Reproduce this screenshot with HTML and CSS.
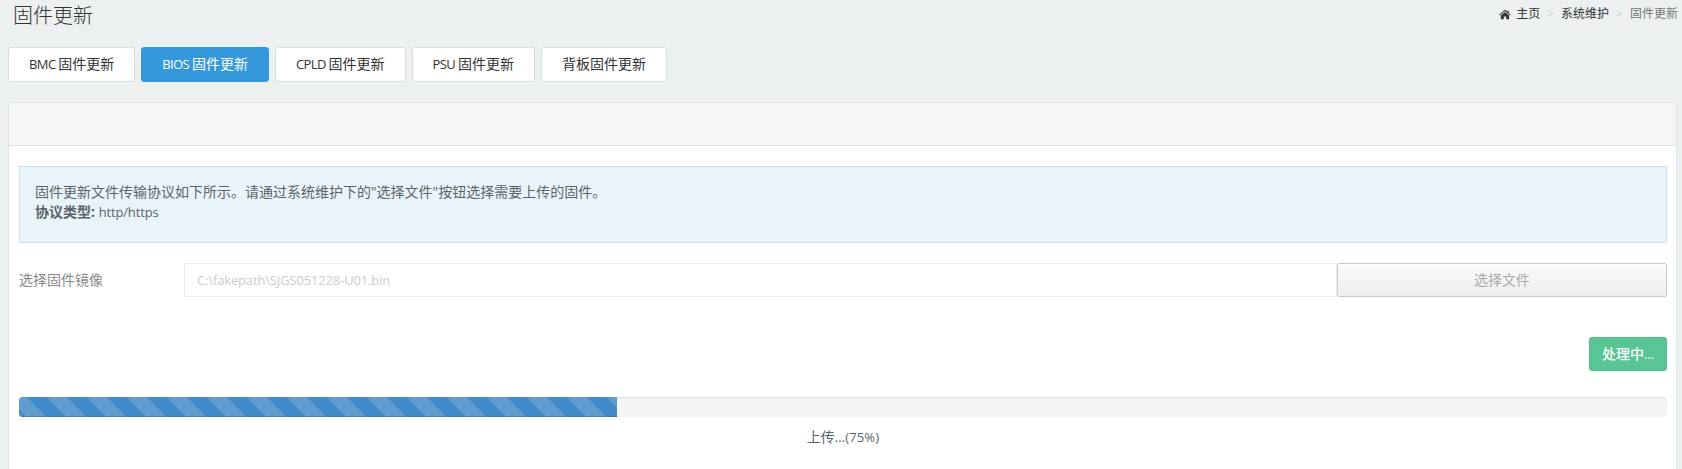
FILE: index.html
```html
<!DOCTYPE html>
<html lang="zh">
<head>
<meta charset="utf-8">
<title>固件更新</title>
<link rel="stylesheet" href="styles.css">
</head>
<body>
<header class="page-head">
  <h1 class="page-title">固件更新</h1>
  <ol class="crumbs">
    <li class="crumb"><svg class="home" viewBox="0 0 14 12"><path d="M7 .6 .2 6.300l.6.8L7 2l6.200 5.100.6-.8-2.300-1.900V1.200H10.700v1.500ZM2.200 7.100V11.600H5.600V8.300H8.400V11.600H11.800V7.100L7 3.100Z"/></svg>主页</li>
    <li class="sep">&gt;</li>
    <li class="crumb">系统维护</li>
    <li class="sep">&gt;</li>
    <li class="crumb current">固件更新</li>
  </ol>
</header>
<nav class="tabs">
  <a class="tab"><span class="lat">BMC </span>固件更新</a>
  <a class="tab active"><span class="lat">BIOS </span>固件更新</a>
  <a class="tab"><span class="lat">CPLD </span>固件更新</a>
  <a class="tab"><span class="lat">PSU </span>固件更新</a>
  <a class="tab">背板固件更新</a>
</nav>
<section class="panel">
  <div class="panel-head"></div>
  <div class="panel-body">
    <div class="alert">
      <p>固件更新文件传输协议如下所示。请通过系统维护下的<span class="quote">"</span>选择文件<span class="quote">"</span>按钮选择需要上传的固件。</p>
      <p><strong>协议类型:</strong> <span class="lat">http/https</span></p>
    </div>
    <div class="field">
      <label class="field-label">选择固件镜像</label>
      <div class="file-input"><span class="lat">C:\fakepath\SJGS051228-U01.bin</span></div>
      <button class="file-btn" disabled>选择文件</button>
    </div>
    <div class="actions"><button class="submit">处理中<span class="lat">...</span></button></div>
    <div class="progress"><div class="bar" style="width:36.3%"></div></div>
    <p class="status">上传<span class="lat wide">...(75%)</span></p>
  </div>
</section>
</body>
</html>
```
FILE: styles.css
```css
* { box-sizing: border-box; }
html, body { height: 100%; overflow: hidden; }
body {
  margin: 0;
  padding: 0 5px 0 8px;
  background: #ecf0f1;
  color: #58666e;
  font: 14px/20px "Open Sans", "Noto Sans CJK SC", sans-serif;
}
.lat { font-size: 13px; letter-spacing: -.15px; }
.lat.wide { letter-spacing: .1px; }
.quote { font-size: 14px; }
.page-head { display: flex; justify-content: space-between; height: 47px; margin-right: -1px; padding-left: 5px; }
.page-title { margin: 1px 0 0; font-size: 20px; line-height: 30px; font-weight: 300; color: #333; }
.crumbs { display: flex; align-items: flex-start; gap: 7px; margin: 4px 0 0; padding: 0; list-style: none; font-size: 12px; line-height: 20px; color: #333; }
.crumb { display: flex; align-items: center; height: 20px; }
.current { color: #777; }
.sep { color: #ccc; }
.home { width: 12px; height: 11px; margin-right: 5px; fill: #333; }
.tabs { display: flex; gap: 6px; height: 55px; align-items: flex-start; }
.tab {
  display: block; height: 35px; padding: 6px 20px;
  background: #fff; border: 1px solid #d5dee0; border-radius: 3px;
  color: #333; white-space: nowrap;
}
.tab .lat { letter-spacing: -.6px; }
.tab.active { background: #3498db; border-color: #3498db; color: #fff; }
.panel { background: #fff; border: 1px solid #dde4e6; border-bottom: 0; border-radius: 3px 3px 0 0; height: 367px; }
.panel-head { height: 43px; background: #f5f7f7; border-bottom: 1px solid #dde4e6; }
.panel-body { padding: 20px 9px 0 10px; }
.alert { height: 77px; padding: 15px 15px; background: #e9f4fa; border: 1px solid #c8e2f3; color: #5c6368; }
.alert p { margin: 0; }
.field { display: flex; align-items: center; height: 34px; margin-top: 20px; }
.field-label { width: 165px; color: #888; }
.file-input { flex: 1; height: 34px; padding: 6px 12px; border: 1px solid #eee; color: #ccc; }
.file-btn {
  width: 330px; height: 34px; padding: 0;
  font: inherit; color: #aaa;
  background: linear-gradient(#fbfbfb, #eeeeee);
  border: 1px solid #ccc; border-radius: 2px;
}
.actions { display: flex; justify-content: flex-end; margin-top: 40px; }
.submit {
  width: 78px; height: 34px; padding: 0;
  font: inherit; font-weight: 500; color: #fff;
  background: #59c595; border: 1px solid #52bd8d; border-radius: 3px;
}
.progress { height: 20px; margin-top: 26px; background: #f5f5f5; border-radius: 4px; overflow: hidden; box-shadow: inset 0 1px 2px rgba(0,0,0,.1); }
.bar {
  height: 100%;
  background-color: #428bca;
  background-image: linear-gradient(45deg, rgba(255,255,255,.15) 25%, transparent 25%, transparent 50%, rgba(255,255,255,.15) 50%, rgba(255,255,255,.15) 75%, transparent 75%, transparent);
  background-size: 40px 40px;
  background-position: 28px 0;
  box-shadow: inset 0 -1px 0 rgba(0,0,0,.15);
}
.status { margin: 10px 0 0; text-align: center; }
```
